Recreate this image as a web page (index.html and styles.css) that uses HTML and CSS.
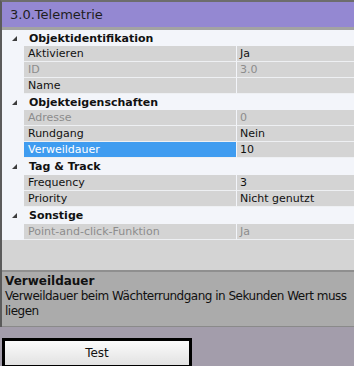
FILE: index.html
```html
<!DOCTYPE html>
<html lang="de">
<head>
    <meta charset="UTF-8">
    <title>3.0.Telemetrie</title>
    <link rel="stylesheet" href="styles.css">
</head>
<body>
    <div class="panel">
        <div class="title">3.0.Telemetrie</div>
        <div class="grid">
            <div class="cat"><svg class="tri" width="5" height="5" viewBox="0 0 5 5"><polygon points="5,0 5,5 0,5"/></svg>Objektidentifikation</div>
            <div class="row"><span class="name">Aktivieren</span><span class="val">Ja</span></div>
            <div class="row off"><span class="name">ID</span><span class="val">3.0</span></div>
            <div class="row"><span class="name">Name</span><span class="val"></span></div>
            <div class="cat"><svg class="tri" width="5" height="5" viewBox="0 0 5 5"><polygon points="5,0 5,5 0,5"/></svg>Objekteigenschaften</div>
            <div class="row off"><span class="name">Adresse</span><span class="val">0</span></div>
            <div class="row"><span class="name">Rundgang</span><span class="val">Nein</span></div>
            <div class="row"><span class="name sel">Verweildauer</span><span class="val">10</span></div>
            <div class="cat tall"><svg class="tri" width="5" height="5" viewBox="0 0 5 5"><polygon points="5,0 5,5 0,5"/></svg>Tag &amp; Track</div>
            <div class="row"><span class="name">Frequency</span><span class="val">3</span></div>
            <div class="row"><span class="name">Priority</span><span class="val">Nicht genutzt</span></div>
            <div class="cat tall"><svg class="tri" width="5" height="5" viewBox="0 0 5 5"><polygon points="5,0 5,5 0,5"/></svg>Sonstige</div>
            <div class="row off"><span class="name">Point-and-click-Funktion</span><span class="val">Ja</span></div>
        </div>
        <div class="filler"></div>
        <div class="desc">
            <div class="desc-title">Verweildauer</div>
            <div class="desc-text">Verweildauer beim Wächterrundgang in Sekunden Wert muss<br>liegen</div>
        </div>
    </div>
    <div class="footer">
        <button class="btn">Test</button>
    </div>
</body>
</html>
```

FILE: styles.css
```css
body {
    margin: 0;
    width: 354px;
    height: 366px;
    overflow: hidden;
    background: #a39dab;
    font-family: "DejaVu Sans", sans-serif;
    color: #111;
}
.panel {
    border-left: 2px solid #5b5b5b;
    border-top: 2px solid #6d6d6d;
    background: #d4d4d4;
}
.title {
    height: 25px;
    line-height: 25px;
    padding-left: 8px;
    background: #9488d2;
    color: #1e1e1e;
    font-size: 13px;
    border-bottom: 3px solid #a3a3a3;
}
.cat {
    display: flex;
    align-items: center;
    height: 16px;
    background: #f3f5fa;
    font-size: 11px;
    font-weight: bold;
}
.cat.tall {
    height: 17px;
}
.tri {
    fill: #3c3c3c;
    margin-left: 10px;
    margin-right: 12px;
}
.row {
    display: flex;
    height: 16px;
    padding-left: 22px;
    background: #f3f5fa;
    font-size: 11px;
}
.row .name,
.row .val {
    box-sizing: border-box;
    height: 16px;
    line-height: 16px;
    background: #d4d4d4;
    border-bottom: 1px solid #eef0f3;
    white-space: nowrap;
}
.row .name {
    width: 213px;
    padding-left: 4px;
    border-right: 1px solid #f3f5fa;
}
.row .val {
    flex: 1;
    padding-left: 3px;
}
.row .sel {
    background: #3f9cf0;
    color: #fff;
}
.row.off {
    color: #8c8c8c;
}
.filler {
    height: 30px;
}
.desc {
    height: 52px;
    padding: 2px 3px 0;
    background: #ababab;
    border-top: 2px solid #8f8f8f;
    border-bottom: 1px solid #8a8a8a;
    font-size: 12px;
    line-height: 15px;
    white-space: nowrap;
    overflow: hidden;
}
.desc-title {
    font-weight: bold;
}
.desc-text {
    letter-spacing: -0.5px;
}
.footer {
    padding: 11px 0 0 2px;
}
.btn {
    display: block;
    box-sizing: border-box;
    width: 190px;
    height: 30px;
    padding: 0;
    border: 3px solid #000;
    border-radius: 0;
    background: linear-gradient(#fbfbfb, #e2e2e2);
    font-family: "DejaVu Sans", sans-serif;
    font-size: 12px;
    color: #111;
}
```
